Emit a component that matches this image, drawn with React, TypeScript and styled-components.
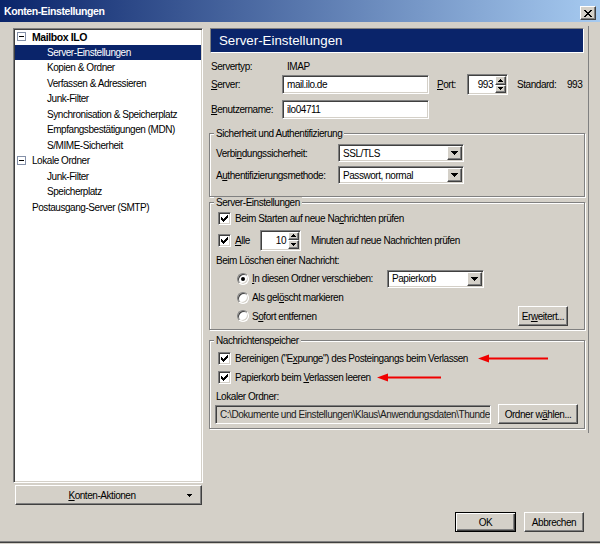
import React from "react";
import styled, { createGlobalStyle, css } from "styled-components";

const GlobalStyle = createGlobalStyle`
  html, body { margin: 0; padding: 0; background: #d4d0c8; }
  body {
    font-family: "Liberation Sans", Arial, sans-serif;
    font-size: 10px;
    letter-spacing: -0.45px;
    color: #000;
  }
  *, *::before, *::after { box-sizing: border-box; }
`;

const sunken = css`
  border: 1px solid;
  border-color: #808080 #ffffff #ffffff #808080;
  box-shadow: inset 1px 1px 0 #404040, inset -1px -1px 0 #d4d0c8;
`;

const raised = css`
  border: 1px solid;
  border-color: #ffffff #404040 #404040 #ffffff;
  box-shadow: inset -1px -1px 0 #808080;
  background: #d4d0c8;
`;

const Window = styled.div`
  width: 600px;
  height: 543px;
  display: flex;
  flex-direction: column;
  background: #d4d0c8;
  border-bottom: 1px solid #404040;
  box-shadow: inset 0 -1px 0 #808080;
`;

const TitleBar = styled.div`
  height: 22px;
  flex: none;
  display: flex;
  align-items: center;
  justify-content: space-between;
  padding: 0 4px;
  background: linear-gradient(to right, #0a246a, #a6caf0);
`;

const TitleText = styled.span`
  color: #fff;
  font-weight: bold;
  font-size: 10.5px;
  letter-spacing: -0.4px;
`;

const CloseButton = styled.div`
  width: 16px;
  height: 14px;
  align-self: flex-end;
  margin-bottom: 2px;
  display: flex;
  align-items: center;
  justify-content: center;
  ${raised};
`;

const Body = styled.div`
  display: flex;
  align-items: flex-start;
  padding: 4px 0 0 13px;
`;

const LeftColumn = styled.div`
  width: 190px;
  margin-top: 2px;
  display: flex;
  flex-direction: column;
  gap: 2px;
`;

const Tree = styled.div`
  height: 455px;
  background: #fff;
  ${sunken};
`;

const TreeRow = styled.div<{ $indent: number; $selected?: boolean; $bold?: boolean }>`
  height: 15.5px;
  margin: 0 1px;
  padding-left: ${(p) => p.$indent}px;
  display: flex;
  align-items: center;
  white-space: nowrap;
  background: ${(p) => (p.$selected ? "#0a246a" : "transparent")};
  color: ${(p) => (p.$selected ? "#fff" : "#000")};
  ${(p) =>
    p.$bold &&
    css`
      font-weight: bold;
      font-size: 10.5px;
      letter-spacing: -0.4px;
    `}
`;

const TreeToggle = styled.span`
  width: 9px;
  height: 9px;
  flex: none;
  margin-right: 6px;
  border: 1px solid #8490a8;
  background: #fff;
  display: flex;
  align-items: center;
  justify-content: center;
  &::after {
    content: "";
    width: 5px;
    height: 1px;
    background: #000;
  }
`;

const MenuButton = styled.div`
  height: 20px;
  margin: 0 1px 0 2px;
  display: flex;
  align-items: center;
  ${raised};
`;

const MenuLabel = styled.span`
  flex: 1;
  text-align: center;
  padding-left: 7px;
`;

const MenuArrowBox = styled.span`
  width: 16px;
  margin-right: 4px;
  display: flex;
  justify-content: center;
`;

const RightPanel = styled.div`
  width: 380px;
  margin-left: 6px;
  padding: 2px 3px 4px 0;
  border-right: 1px solid #808080;
  display: flex;
  flex-direction: column;
`;

const PageHeader = styled.div`
  height: 25px;
  margin: 0 1px;
  padding-left: 8px;
  display: flex;
  align-items: center;
  background: #0a246a;
  border: 1px solid;
  border-color: #808080 #ffffff #ffffff #808080;
  color: #fff;
  font-size: 13.3px;
  letter-spacing: 0;
`;

const InfoRow = styled.div<{ $h: number; $mt: number }>`
  height: ${(p) => p.$h}px;
  margin-top: ${(p) => p.$mt}px;
  padding-left: 2px;
  display: flex;
  align-items: center;
  white-space: nowrap;
`;

const FieldLabel = styled.span<{ $w?: number; $ml?: number }>`
  flex: none;
  width: ${(p) => (p.$w ? `${p.$w}px` : "auto")};
  margin-left: ${(p) => p.$ml ?? 0}px;
  white-space: nowrap;
`;

const InfoValue = styled.span`
  padding-left: 5px;
`;

const TextField = styled.div<{ $w: number; $readOnly?: boolean; $ml?: number }>`
  width: ${(p) => p.$w}px;
  height: 19px;
  flex: none;
  margin-left: ${(p) => p.$ml ?? 0}px;
  padding: 0 4px;
  display: flex;
  align-items: center;
  white-space: nowrap;
  overflow: hidden;
  background: ${(p) => (p.$readOnly ? "#d4d0c8" : "#fff")};
  color: ${(p) => (p.$readOnly ? "#202020" : "#000")};
  ${sunken};
`;

const SpinBox = styled.div<{ $w: number }>`
  width: ${(p) => p.$w}px;
  height: 21px;
  flex: none;
  padding: 1px;
  display: flex;
  background: #fff;
  ${sunken};
`;

const SpinValue = styled.span`
  flex: 1;
  align-self: center;
  text-align: right;
  padding-right: 2px;
`;

const SpinButtons = styled.div`
  width: 11px;
  display: flex;
  flex-direction: column;
`;

const SpinButton = styled.div`
  flex: 1;
  display: flex;
  align-items: center;
  justify-content: center;
  ${raised};
`;

const SelectBox = styled.div<{ $w: number }>`
  width: ${(p) => p.$w}px;
  height: 18px;
  flex: none;
  padding: 1px;
  display: flex;
  background: #fff;
  ${sunken};
`;

const SelectText = styled.span`
  flex: 1;
  align-self: center;
  padding-left: 3px;
  white-space: nowrap;
  overflow: hidden;
`;

const DropButton = styled.span`
  width: 15px;
  display: flex;
  align-items: center;
  justify-content: center;
  ${raised};
`;

const Group = styled.fieldset<{ $mt: number; $pb: number }>`
  width: 376px;
  min-inline-size: 0;
  margin: ${(p) => p.$mt}px 0 0 0;
  padding: 0 6px ${(p) => p.$pb}px 6px;
  border: 1px solid #808080;
  box-shadow: inset 1px 1px 0 #fff, 1px 1px 0 #fff;
`;

const Legend = styled.legend`
  margin-left: -2px;
  padding: 0 2px;
  line-height: 11px;
  background: #d4d0c8;
`;

const GroupRow = styled.div<{ $h: number; $mt: number }>`
  position: relative;
  height: ${(p) => p.$h}px;
  margin-top: ${(p) => p.$mt}px;
  display: flex;
  align-items: center;
  white-space: nowrap;
`;

const CheckBox = styled.span`
  width: 13px;
  height: 13px;
  flex: none;
  margin-left: 2px;
  margin-right: 4px;
  display: flex;
  align-items: center;
  justify-content: center;
  background: #fff;
  ${sunken};
`;

const Radio = styled.span`
  width: 12px;
  height: 12px;
  flex: none;
  margin-left: 21px;
  margin-right: 3px;
  border-radius: 50%;
  display: flex;
  align-items: center;
  justify-content: center;
  background: #fff;
  border: 1px solid;
  border-color: #808080 #ffffff #ffffff #808080;
  box-shadow: inset 1px 1px 0 #404040, inset -1px -1px 0 #d4d0c8;
`;

const RadioDot = styled.span`
  width: 4px;
  height: 4px;
  border-radius: 50%;
  background: #000;
`;

const Spacer = styled.span`
  flex: 1;
`;

const PushButton = styled.button<{ $w: number; $default?: boolean; $ml?: number; $mr?: number }>`
  width: ${(p) => p.$w}px;
  height: 20px;
  flex: none;
  margin: 0 ${(p) => p.$mr ?? 0}px 0 ${(p) => p.$ml ?? 0}px;
  padding: 0;
  display: flex;
  align-items: center;
  justify-content: center;
  white-space: nowrap;
  font: inherit;
  letter-spacing: inherit;
  color: #000;
  background: #d4d0c8;
  ${(p) =>
    p.$default
      ? css`
          border: 1px solid #000;
          box-shadow: inset 1px 1px 0 #fff, inset -1px -1px 0 #404040, inset -2px -2px 0 #808080;
        `
      : raised};
`;

const Footer = styled.div`
  margin-top: auto;
  display: flex;
  justify-content: flex-end;
  gap: 8px;
  padding: 0 16px 10px 0;
`;

const Annotation = styled.svg<{ $left: number }>`
  position: absolute;
  left: ${(p) => p.$left}px;
  top: 50%;
  margin-top: -4.5px;
`;

/* ---------- small drawings ---------- */

const CloseGlyph = () => (
  <svg width="8" height="7" viewBox="0 0 8 7" shapeRendering="crispEdges">
    <path
      d="M0 0h2v1H0zM6 0h2v1H6zM1 1h2v1H1zM5 1h2v1H5zM2 2h4v1H2zM3 3h2v1H3zM2 4h4v1H2zM1 5h2v1H1zM5 5h2v1H5zM0 6h2v1H0zM6 6h2v1H6z"
      fill="#000"
    />
  </svg>
);

const DownTriangle7 = () => (
  <svg width="7" height="4" viewBox="0 0 7 4" shapeRendering="crispEdges">
    <path d="M0 0h7v1H0zM1 1h5v1H1zM2 2h3v1H2zM3 3h1v1H3z" fill="#000" />
  </svg>
);

const DownTriangle5 = () => (
  <svg width="5" height="3" viewBox="0 0 5 3" shapeRendering="crispEdges">
    <path d="M0 0h5v1H0zM1 1h3v1H1zM2 2h1v1H2z" fill="#000" />
  </svg>
);

const UpTriangle5 = () => (
  <svg width="5" height="3" viewBox="0 0 5 3" shapeRendering="crispEdges">
    <path d="M2 0h1v1H2zM1 1h3v1H1zM0 2h5v1H0z" fill="#000" />
  </svg>
);

const CheckMark = () => (
  <svg width="7" height="7" viewBox="0 0 7 7" shapeRendering="crispEdges">
    <path
      d="M0 2h1v3H0zM1 3h1v3H1zM2 4h1v3H2zM3 3h1v3H3zM4 2h1v3H4zM5 1h1v3H5zM6 0h1v3H6z"
      fill="#000"
    />
  </svg>
);

const RedArrow = ({ left, width }: { left: number; width: number }) => (
  <Annotation $left={left} width={width} height="9" viewBox={`0 0 ${width} 9`}>
    <polygon points="0,4.5 11,0.5 11,8.5" fill="#f00000" />
    <rect x="9" y="3.5" width={width - 9} height="2" fill="#f00000" />
  </Annotation>
);

/* ---------- composed widgets ---------- */

const Select = ({ w, value }: { w: number; value: string }) => (
  <SelectBox $w={w}>
    <SelectText>{value}</SelectText>
    <DropButton>
      <DownTriangle7 />
    </DropButton>
  </SelectBox>
);

const Spinner = ({ w, value }: { w: number; value: string }) => (
  <SpinBox $w={w}>
    <SpinValue>{value}</SpinValue>
    <SpinButtons>
      <SpinButton>
        <UpTriangle5 />
      </SpinButton>
      <SpinButton>
        <DownTriangle5 />
      </SpinButton>
    </SpinButtons>
  </SpinBox>
);

type TreeItem = { label: string; indent: number; toggle?: boolean; bold?: boolean; selected?: boolean };

const treeItems: TreeItem[] = [
  { label: "Mailbox ILO", indent: 2, toggle: true, bold: true },
  { label: "Server-Einstellungen", indent: 32, selected: true },
  { label: "Kopien & Ordner", indent: 32 },
  { label: "Verfassen & Adressieren", indent: 32 },
  { label: "Junk-Filter", indent: 32 },
  { label: "Synchronisation & Speicherplatz", indent: 32 },
  { label: "Empfangsbestätigungen (MDN)", indent: 32 },
  { label: "S/MIME-Sicherheit", indent: 32 },
  { label: "Lokale Ordner", indent: 2, toggle: true },
  { label: "Junk-Filter", indent: 32 },
  { label: "Speicherplatz", indent: 32 },
  { label: "Postausgang-Server (SMTP)", indent: 17 },
];

export default function App() {
  return (
    <>
      <GlobalStyle />
      <Window>
        <TitleBar>
          <TitleText>Konten-Einstellungen</TitleText>
          <CloseButton>
            <CloseGlyph />
          </CloseButton>
        </TitleBar>

        <Body>
          <LeftColumn>
            <Tree>
              {treeItems.map((item, i) => (
                <TreeRow key={i} $indent={item.indent} $selected={item.selected} $bold={item.bold}>
                  {item.toggle && <TreeToggle />}
                  {item.label}
                </TreeRow>
              ))}
            </Tree>
            <MenuButton>
              <MenuLabel>
                <u>K</u>onten-Aktionen
              </MenuLabel>
              <MenuArrowBox>
                <DownTriangle5 />
              </MenuArrowBox>
            </MenuButton>
          </LeftColumn>

          <RightPanel>
            <PageHeader>Server-Einstellungen</PageHeader>

            <InfoRow $h={14} $mt={6}>
              <FieldLabel $w={71}>Servertyp:</FieldLabel>
              <InfoValue>IMAP</InfoValue>
            </InfoRow>
            <InfoRow $h={21} $mt={1}>
              <FieldLabel $w={71}>
                <u>S</u>erver:
              </FieldLabel>
              <TextField $w={147}>mail.ilo.de</TextField>
              <FieldLabel $w={30} $ml={8}>
                <u>P</u>ort:
              </FieldLabel>
              <Spinner w={41} value="993" />
              <FieldLabel $w={50} $ml={9}>
                Standard:
              </FieldLabel>
              <FieldLabel>993</FieldLabel>
            </InfoRow>
            <InfoRow $h={19} $mt={5}>
              <FieldLabel $w={71}>
                <u>B</u>enutzername:
              </FieldLabel>
              <TextField $w={147}>ilo04711</TextField>
            </InfoRow>

            <Group $mt={9} $pb={12}>
              <Legend>Sicherheit und Authentifizierung</Legend>
              <GroupRow $h={18} $mt={5}>
                <FieldLabel $w={122}>
                  Verbi<u>n</u>dungssicherheit:
                </FieldLabel>
                <Select w={126} value="SSL/TLS" />
              </GroupRow>
              <GroupRow $h={18} $mt={4}>
                <FieldLabel $w={122}>
                  A<u>u</u>thentifizierungsmethode:
                </FieldLabel>
                <Select w={126} value="Passwort, normal" />
              </GroupRow>
            </Group>

            <Group $mt={0} $pb={3}>
              <Legend>Server-Einstellungen</Legend>
              <GroupRow $h={16} $mt={2}>
                <CheckBox>
                  <CheckMark />
                </CheckBox>
                <span>
                  Beim Starten auf neue Na<u>c</u>hrichten prüfen
                </span>
              </GroupRow>
              <GroupRow $h={22} $mt={3}>
                <CheckBox>
                  <CheckMark />
                </CheckBox>
                <FieldLabel $w={25}>
                  <u>A</u>lle
                </FieldLabel>
                <Spinner w={41} value="10" />
                <FieldLabel $ml={10}>Minuten auf neue Nachrichten prüfen</FieldLabel>
              </GroupRow>
              <GroupRow $h={14} $mt={2}>
                Beim Löschen einer Nachricht:
              </GroupRow>
              <GroupRow $h={19} $mt={2}>
                <Radio>
                  <RadioDot />
                </Radio>
                <FieldLabel $w={135}>
                  <u>I</u>n diesen Ordner verschieben:
                </FieldLabel>
                <Select w={97} value="Papierkorb" />
              </GroupRow>
              <GroupRow $h={15} $mt={2}>
                <Radio />
                <span>
                  Als gel<u>ö</u>scht markieren
                </span>
              </GroupRow>
              <GroupRow $h={20} $mt={1}>
                <Radio />
                <span>
                  S<u>o</u>fort entfernen
                </span>
                <Spacer />
                <PushButton $w={50} $mr={10}>
                  Er<u>w</u>eitert...
                </PushButton>
              </GroupRow>
            </Group>

            <Group $mt={5} $pb={4}>
              <Legend>Nachrichtenspeicher</Legend>
              <GroupRow $h={16} $mt={4}>
                <CheckBox>
                  <CheckMark />
                </CheckBox>
                <span>
                  Bereinigen ("E<u>x</u>punge") des Posteingangs beim Verlassen
                </span>
                <RedArrow left={262} width={70} />
              </GroupRow>
              <GroupRow $h={16} $mt={3}>
                <CheckBox>
                  <CheckMark />
                </CheckBox>
                <span>
                  Papierkorb beim <u>V</u>erlassen leeren
                </span>
                <RedArrow left={161} width={64} />
              </GroupRow>
              <GroupRow $h={14} $mt={4}>
                Lokaler Ordner:
              </GroupRow>
              <GroupRow $h={20} $mt={1}>
                <TextField $w={276} $ml={-1} $readOnly>
                  C:\Dokumente und Einstellungen\Klaus\Anwendungsdaten\Thunderbird\Profiles
                </TextField>
                <PushButton $w={80} $ml={7}>
                  Ordner w<u>ä</u>hlen...
                </PushButton>
              </GroupRow>
            </Group>
          </RightPanel>
        </Body>

        <Footer>
          <PushButton $w={61} $default>
            OK
          </PushButton>
          <PushButton $w={60}>Abbrechen</PushButton>
        </Footer>
      </Window>
    </>
  );
}
